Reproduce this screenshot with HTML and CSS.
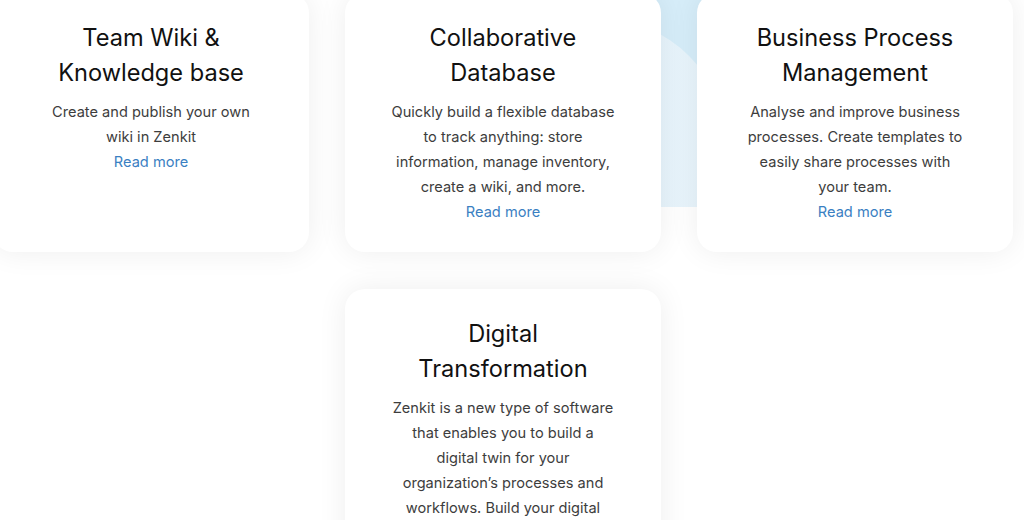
FILE: index.html
```html
<!DOCTYPE html>
<html lang="en">
<head>
<meta charset="utf-8">
<title>Zenkit use cases</title>
<link rel="stylesheet" href="styles.css">
</head>
<body>
<section class="usecases">
  <div class="blob"><div class="blob-inner"></div></div>
  <div class="grid">
    <article class="card">
      <h3 class="card-title">Team Wiki &amp; Knowledge base</h3>
      <p class="card-text">Create and publish your own wiki in Zenkit</p>
      <a class="card-link" href="#">Read more</a>
    </article>
    <article class="card">
      <h3 class="card-title">Collaborative Database</h3>
      <p class="card-text">Quickly build a flexible database to track anything: store information, manage inventory, create a wiki, and more.</p>
      <a class="card-link" href="#">Read more</a>
    </article>
    <article class="card">
      <h3 class="card-title">Business Process Management</h3>
      <p class="card-text">Analyse and improve business processes. Create templates to easily share processes with your team.</p>
      <a class="card-link" href="#">Read more</a>
    </article>
    <article class="card card-center">
      <h3 class="card-title">Digital Transformation</h3>
      <p class="card-text">Zenkit is a new type of software that enables you to build a digital twin for your organization’s processes and workflows. Build your digital twin today and start transforming your business.</p>
      <a class="card-link" href="#">Read more</a>
    </article>
  </div>
</section>
</body>
</html>
```

FILE: styles.css
```css
* { box-sizing: border-box; }
html, body {
  margin: 0;
  padding: 0;
  background: #ffffff;
  overflow: hidden;
}
body {
  font-family: Inter, "Noto Sans", "Liberation Sans", sans-serif;
  width: 1024px;
  height: 520px;
}
.usecases {
  position: relative;
  width: 1024px;
  height: 520px;
  overflow: hidden;
}
.blob {
  position: absolute;
  left: 560px;
  top: 0;
  width: 200px;
  height: 207px;
  overflow: hidden;
  background: #d6edf9;
}
.blob-inner {
  position: absolute;
  left: -86px;
  top: 19px;
  width: 252px;
  height: 252px;
  border-radius: 50%;
  background: linear-gradient(90deg, #eaf5fb 0%, #e6f3fb 60%, #e9f5fc 100%);
}
.grid {
  position: relative;
  display: grid;
  grid-template-columns: 316px 316px 316px;
  column-gap: 36px;
  row-gap: 37px;
  margin-left: -7px;
  margin-top: -7px;
}
.card {
  background: #ffffff;
  border-radius: 20px;
  box-shadow: 0 0 30px rgba(0, 0, 0, 0.07);
  padding: 27px 46px 27px;
  text-align: center;
}
.card-center {
  grid-column: 2;
}
.card-title {
  margin: 0 0 10px;
  font-size: 23.6px;
  line-height: 35px;
  font-weight: 400;
  color: #111111;
}
.card-text {
  margin: 0;
  font-size: 14.6px;
  line-height: 25px;
  color: #3d3d3d;
}
.card-link {
  display: block;
  font-size: 14.6px;
  line-height: 25px;
  color: #3a80c2;
  text-decoration: none;
}
```
